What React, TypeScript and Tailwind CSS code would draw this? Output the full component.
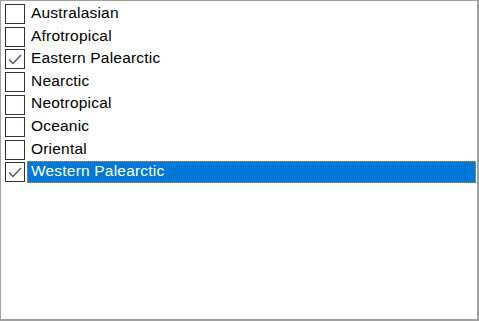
const regions = [
  { name: "Australasian", checked: false },
  { name: "Afrotropical", checked: false },
  { name: "Eastern Palearctic", checked: true },
  { name: "Nearctic", checked: false },
  { name: "Neotropical", checked: false },
  { name: "Oceanic", checked: false },
  { name: "Oriental", checked: false },
  { name: "Western Palearctic", checked: true },
];

function CheckBox({ checked }: { checked: boolean }) {
  return (
    <div className="w-[20px] h-[20px] shrink-0 border-[1.5px] border-[#333333] bg-white flex items-center justify-center">
      {checked && (
        <svg width="16" height="16" viewBox="0 0 16 16">
          <path d="M2 8.5 L6 12.5 L14 4" fill="none" stroke="#555555" strokeWidth="1.4" />
        </svg>
      )}
    </div>
  );
}

export default function App() {
  const selected = 7;
  return (
    <div className="w-[479px] h-[321px] bg-white border-l border-t border-r-2 border-b-2 border-[#a0a0a0] pt-[2px] pl-[4px] pr-[1px] font-['Liberation_Sans',Arial,sans-serif] text-[15.5px] tracking-[0.2px] text-black">
      {regions.map((r, i) => (
        <div key={r.name} className="h-[22.6px] flex items-center">
          <CheckBox checked={r.checked} />
          {i === selected ? (
            <div className="ml-[2px] flex-1 h-[22px] bg-[#0078d7] text-white pl-[3px] pb-[3px] border border-dotted border-[#e08a2c] flex items-center leading-none">
              {r.name}
            </div>
          ) : (
            <div className="ml-[2px] flex-1 h-[22px] pl-[4px] pb-[3px] flex items-center leading-none">{r.name}</div>
          )}
        </div>
      ))}
    </div>
  );
}
